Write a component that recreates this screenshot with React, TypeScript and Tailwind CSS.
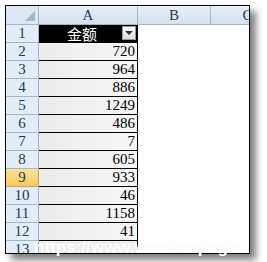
import React from "react";

const values = [720, 964, 886, 1249, 486, 7, 605, 933, 46, 1158, 41];

export default function App() {
  const serif = { fontFamily: '"Liberation Serif", "Times New Roman", serif' };
  return (
    <div className="w-[267px] h-[262px] bg-white relative overflow-hidden">
      <div className="absolute left-[5px] top-[5px] w-[245px] h-[249px] shadow-[6px_6px_7px_rgba(0,0,0,0.5)] bg-white" />
      <div
        className="absolute left-[5px] top-[5px] w-[245px] h-[249px] border border-black bg-white overflow-hidden flex flex-col"
        style={serif}
      >
        {/* header row */}
        <div className="flex h-[19px] shrink-0 text-[15px] leading-[18px] text-[#1e395b]">
          <div className="w-[33px] shrink-0 bg-[#dde7f3] border-r border-b border-[#9eb6ce] relative">
            <div className="absolute right-[3px] bottom-[3px] w-0 h-0 border-l-[10px] border-l-transparent border-b-[10px] border-b-[#a9b4c2]" />
          </div>
          <div className="w-[99px] shrink-0 bg-gradient-to-b from-[#e8eef7] to-[#d6e1ef] border-r border-b border-[#9eb6ce] text-center">A</div>
          <div className="w-[73px] shrink-0 bg-gradient-to-b from-[#e8eef7] to-[#d6e1ef] border-r border-b border-[#9eb6ce] text-center">B</div>
          <div className="w-[73px] shrink-0 bg-gradient-to-b from-[#e8eef7] to-[#d6e1ef] border-b border-[#9eb6ce] text-center">C</div>
        </div>
        {/* row 1 */}
        <div className="flex h-[18px] shrink-0 text-[15px] leading-[17px]">
          <div className="w-[33px] shrink-0 bg-[#e4ecf7] border-r border-b border-[#9eb6ce] text-center text-[#1e395b]">1</div>
          <div className="w-[99px] shrink-0 bg-black border-b border-r border-black relative text-white text-center pr-[12px]" style={{ fontFamily: '"Noto Sans CJK SC", sans-serif', fontSize: 15, lineHeight: "17px" }}>
            金额
            <div className="absolute right-[1px] top-[1px] w-[14px] h-[14px] bg-gradient-to-b from-[#ffffff] to-[#dcdcdc] border border-[#9a9a9a] flex items-center justify-center">
              <div className="w-0 h-0 border-l-[4px] border-l-transparent border-r-[4px] border-r-transparent border-t-[4px] border-t-[#333]" />
            </div>
          </div>
          <div className="flex-1 bg-white" />
        </div>
        {values.map((v, i) => {
          const n = i + 2;
          const hl = n === 9;
          return (
            <div key={n} className="flex h-[18px] shrink-0 text-[15px] leading-[17px]">
              <div
                className={
                  hl
                    ? "w-[33px] shrink-0 bg-gradient-to-b from-[#fbe29d] to-[#f6c95a] border-r border-b border-[#c9a552] text-center text-[#1e395b]"
                    : "w-[33px] shrink-0 bg-[#e4ecf7] border-r border-b border-[#9eb6ce] text-center text-[#1e395b]"
                }
              >
                {n}
              </div>
              <div className="w-[99px] shrink-0 bg-gradient-to-r from-[#ececec] to-[#f6f6f6] border-b border-r border-black text-right pr-[2px] text-black">
                {v}
              </div>
              <div className="flex-1 bg-white" />
            </div>
          );
        })}
        <div className="flex h-[18px] shrink-0 text-[15px] leading-[17px]">
          <div className="w-[33px] shrink-0 bg-[#e4ecf7] border-r border-[#9eb6ce] text-center text-[#1e395b]">13</div>
          <div className="w-[99px] shrink-0 bg-[#efefef] border-r border-black" />
          <div className="flex-1 bg-white" />
        </div>
      </div>
      <div
        className="absolute left-[34px] top-[239px] text-white font-bold text-[17px] leading-[17px] whitespace-nowrap"
        style={{
          fontFamily: '"Liberation Sans", Arial, sans-serif',
          textShadow: "0 0 1px rgba(200,200,200,0.35)",
        }}
      >
        https://www.wuxiaoqing.c
      </div>
    </div>
  );
}
